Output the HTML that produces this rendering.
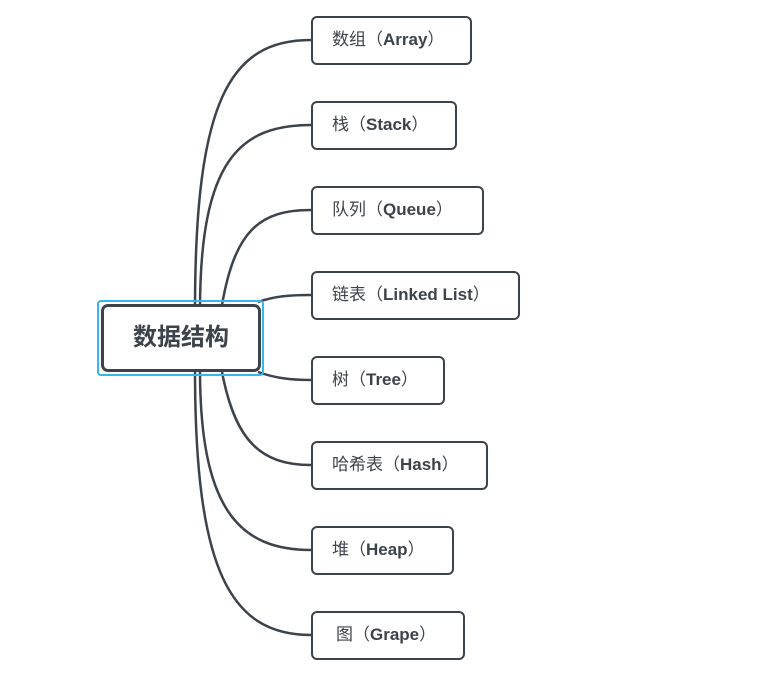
<!DOCTYPE html>
<html><head><meta charset="utf-8"><style>
body{margin:0;width:765px;height:688px;background:#fff;position:relative;overflow:hidden;font-family:"Liberation Sans","Noto Sans CJK SC",sans-serif;}
svg{position:absolute;left:0;top:0}
.b{position:absolute;left:311px;border:2.5px solid #3d434b;border-radius:6px;box-sizing:border-box;height:49px;font-size:17px;color:#3d434b;line-height:44px;padding-left:19px;background:#fff}
.b b{font-weight:bold}
.c{position:absolute;left:97px;top:300px;width:167px;height:76px;border:2px solid #39b5ee;border-radius:4px;box-sizing:border-box}
.ci{position:absolute;left:101px;top:304px;width:160px;height:68px;border:3px solid #3d434b;border-radius:7px;box-sizing:border-box;background:#fff;font-size:24px;font-weight:bold;color:#3d434b;text-align:center;line-height:62px}
</style></head><body>
<svg width="765" height="688" fill="none" stroke="#3d434b" stroke-width="2.5">
<path d="M195,310 C195,100 230,40 311,40"/>
<path d="M200,310 C200,160 240,125 311,125"/>
<path d="M222,305 C235,230 260,210 311,210"/>
<path d="M258,302 C275,296 290,295 311,295"/>
<path d="M258,372 C275,378 290,380 311,380"/>
<path d="M222,372 C235,440 260,465 311,465"/>
<path d="M200,370 C200,510 240,550 311,550"/>
<path d="M195,370 C195,570 230,635 311,635"/>
</svg>
<div class="c"></div><div class="ci">数据结构</div>
<div class="b" style="top:16px;width:161px">数组（<b>Array</b>）</div>
<div class="b" style="top:101px;width:146px">栈（<b>Stack</b>）</div>
<div class="b" style="top:186px;width:173px">队列（<b>Queue</b>）</div>
<div class="b" style="top:271px;width:209px">链表（<b>Linked List</b>）</div>
<div class="b" style="top:356px;width:134px">树（<b>Tree</b>）</div>
<div class="b" style="top:441px;width:177px">哈希表（<b>Hash</b>）</div>
<div class="b" style="top:526px;width:143px">堆（<b>Heap</b>）</div>
<div class="b" style="top:611px;width:154px;padding-left:23px">图（<b>Grape</b>）</div>
</body></html>
